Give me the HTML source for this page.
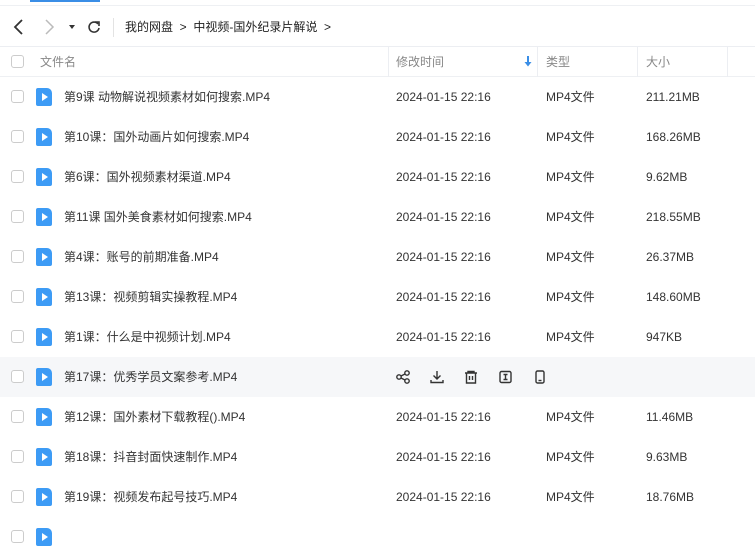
<!DOCTYPE html>
<html><head><meta charset="utf-8"><style>
*{margin:0;padding:0;box-sizing:border-box}
body{width:755px;height:532px;overflow:hidden;background:#fff;font-family:"Liberation Sans","Noto Sans CJK SC",sans-serif;color:#333;font-size:12px;position:relative}
.abs{position:absolute}
.tab{left:30px;top:0;width:70px;height:2px;background:#3a8ee6}
.topline{left:0;top:5px;width:755px;height:1px;background:#eef0f3}
.crumb{left:125px;top:14px;height:26px;line-height:26px;font-size:12px;color:#222}
.hline{left:0;top:46px;width:755px;height:1px;background:#eceef2}
.head{left:0;top:47px;width:755px;height:30px;border-bottom:1px solid #eef0f3}
.head span{position:absolute;top:0;line-height:30px;color:#888;font-size:12px}
.vd{position:absolute;top:0;width:1px;height:30px;background:#eceef2}
.cb{position:absolute;left:11px;width:13px;height:13px;border:1px solid #ccc;border-radius:3px;background:#fff}
.row{position:absolute;left:0;width:755px;height:40px}
.row span{position:absolute;top:0;line-height:40px;font-size:12px;color:#333}
.ic{position:absolute;left:36px;top:11px;width:16px;height:18px;background:#3d9bf5;border-radius:2px 5px 2px 2px}
.ic:after{content:"";position:absolute;left:6px;top:5px;border-left:6px solid #fff;border-top:4px solid transparent;border-bottom:4px solid transparent}
</style></head><body>
<div class="abs tab"></div>
<div class="abs topline"></div>
<svg class="abs" style="left:0;top:14px" width="125" height="26">
<path d="M22 6 L15 13 L22 20" stroke="#333" stroke-width="1.8" fill="none"/>
<path d="M46 6 L53 13 L46 20" stroke="#bbb" stroke-width="1.5" fill="none"/>
<path d="M69 11 L75 11 L72 15Z" fill="#333"/>
<path d="M98 10 A5 5 0 1 0 99 14" stroke="#333" stroke-width="1.6" fill="none"/><path d="M95 8 L99 8 L99 12" stroke="#333" stroke-width="1.6" fill="none"/>
<line x1="113.5" y1="4" x2="113.5" y2="23" stroke="#e3e3e3"/>
</svg>
<div class="abs crumb">我的网盘&nbsp;&nbsp;&gt;&nbsp;&nbsp;中视频-国外纪录片解说&nbsp;&nbsp;&gt;</div>
<div class="abs hline"></div>
<div class="abs head">
<div class="cb" style="top:8px"></div>
<span style="left:40px">文件名</span>
<div class="vd" style="left:388px"></div>
<span style="left:396px">修改时间</span>
<svg style="position:absolute;left:524px;top:9px" width="8" height="11"><path d="M4 0V8" stroke="#3a8ee6" stroke-width="2"/><path d="M0.5 6L4 10.5L7.5 6Z" fill="#3a8ee6"/></svg>
<div class="vd" style="left:537px"></div>
<span style="left:546px">类型</span>
<div class="vd" style="left:637px"></div>
<span style="left:646px">大小</span>
<div class="vd" style="left:727px"></div>
</div>
<div class="row" style="top:77px"><div class="cb" style="top:13px"></div><div class="ic"></div><span style="left:64px">第9课 动物解说视频素材如何搜索.MP4</span><span style="left:396px">2024-01-15 22:16</span><span style="left:546px">MP4文件</span><span style="left:646px">211.21MB</span></div>
<div class="row" style="top:117px"><div class="cb" style="top:13px"></div><div class="ic"></div><span style="left:64px">第10课：国外动画片如何搜索.MP4</span><span style="left:396px">2024-01-15 22:16</span><span style="left:546px">MP4文件</span><span style="left:646px">168.26MB</span></div>
<div class="row" style="top:157px"><div class="cb" style="top:13px"></div><div class="ic"></div><span style="left:64px">第6课：国外视频素材渠道.MP4</span><span style="left:396px">2024-01-15 22:16</span><span style="left:546px">MP4文件</span><span style="left:646px">9.62MB</span></div>
<div class="row" style="top:197px"><div class="cb" style="top:13px"></div><div class="ic"></div><span style="left:64px">第11课 国外美食素材如何搜索.MP4</span><span style="left:396px">2024-01-15 22:16</span><span style="left:546px">MP4文件</span><span style="left:646px">218.55MB</span></div>
<div class="row" style="top:237px"><div class="cb" style="top:13px"></div><div class="ic"></div><span style="left:64px">第4课：账号的前期准备.MP4</span><span style="left:396px">2024-01-15 22:16</span><span style="left:546px">MP4文件</span><span style="left:646px">26.37MB</span></div>
<div class="row" style="top:277px"><div class="cb" style="top:13px"></div><div class="ic"></div><span style="left:64px">第13课：视频剪辑实操教程.MP4</span><span style="left:396px">2024-01-15 22:16</span><span style="left:546px">MP4文件</span><span style="left:646px">148.60MB</span></div>
<div class="row" style="top:317px"><div class="cb" style="top:13px"></div><div class="ic"></div><span style="left:64px">第1课：什么是中视频计划.MP4</span><span style="left:396px">2024-01-15 22:16</span><span style="left:546px">MP4文件</span><span style="left:646px">947KB</span></div>
<div class="row" style="top:357px;background:#f6f7f9"><div class="cb" style="top:13px"></div><div class="ic"></div><span style="left:64px">第17课：优秀学员文案参考.MP4</span>
<svg style="position:absolute;left:396px;top:12px" width="160" height="16" fill="none" stroke="#333" stroke-width="1.4">
<circle cx="3" cy="8" r="2.2"/><circle cx="11" cy="4" r="2.2"/><circle cx="11" cy="12" r="2.2"/><path d="M5 7L9 5M5 9L9 11"/>
<path d="M41 2V10M37.5 6.5L41 10L44.5 6.5M35 11V13.5H47V11"/>
<path d="M69 4H81M72 4V2.5H78V4M70.5 4V14H79.5V4M73.5 7V11M76.5 7V11"/>
<rect x="104" y="2.5" width="11" height="11" rx="1.5"/><path d="M107.5 5.5H111.5M109.5 5.5V10.5M107.5 10.5H111.5"/>
<rect x="140" y="2" width="8" height="12" rx="1.5"/><path d="M142.5 11.5H145.5"/>
</svg></div>
<div class="row" style="top:397px"><div class="cb" style="top:13px"></div><div class="ic"></div><span style="left:64px">第12课：国外素材下载教程().MP4</span><span style="left:396px">2024-01-15 22:16</span><span style="left:546px">MP4文件</span><span style="left:646px">11.46MB</span></div>
<div class="row" style="top:437px"><div class="cb" style="top:13px"></div><div class="ic"></div><span style="left:64px">第18课：抖音封面快速制作.MP4</span><span style="left:396px">2024-01-15 22:16</span><span style="left:546px">MP4文件</span><span style="left:646px">9.63MB</span></div>
<div class="row" style="top:477px"><div class="cb" style="top:13px"></div><div class="ic"></div><span style="left:64px">第19课：视频发布起号技巧.MP4</span><span style="left:396px">2024-01-15 22:16</span><span style="left:546px">MP4文件</span><span style="left:646px">18.76MB</span></div>
<div class="row" style="top:517px"><div class="cb" style="top:13px"></div><div class="ic"></div></div>
</body></html>
